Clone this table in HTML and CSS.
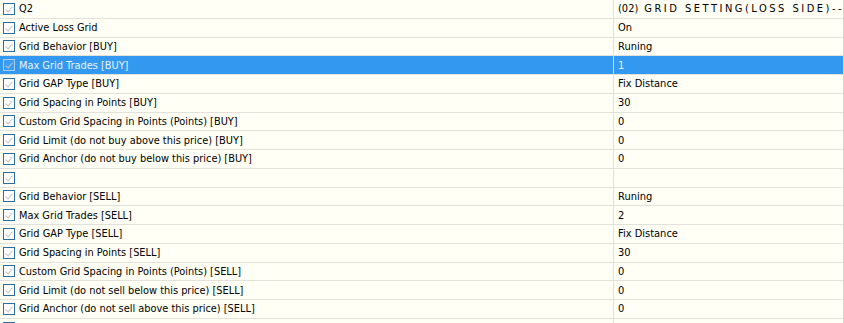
FILE: index.html
```html
<!DOCTYPE html>
<html>
<head>
<meta charset="utf-8">
<link rel="stylesheet" href="styles.css">
</head>
<body>
<div class="grid">
  <div class="row"><div class="name"><span class="cb"></span>Q2</div><div class="val"><span>(02)</span><span class="hdr">GRID SETTING(LOSS SIDE)--</span></div></div>
  <div class="row"><div class="name"><span class="cb"></span>Active Loss Grid</div><div class="val">On</div></div>
  <div class="row"><div class="name"><span class="cb"></span>Grid Behavior [BUY]</div><div class="val">Runing</div></div>
  <div class="row sel"><div class="name"><span class="cb"></span>Max Grid Trades [BUY]</div><div class="val">1</div></div>
  <div class="row"><div class="name"><span class="cb"></span>Grid GAP Type [BUY]</div><div class="val">Fix Distance</div></div>
  <div class="row"><div class="name"><span class="cb"></span>Grid Spacing in Points [BUY]</div><div class="val">30</div></div>
  <div class="row"><div class="name"><span class="cb"></span>Custom Grid Spacing in Points (Points) [BUY]</div><div class="val">0</div></div>
  <div class="row"><div class="name"><span class="cb"></span>Grid Limit (do not buy above this price) [BUY]</div><div class="val">0</div></div>
  <div class="row"><div class="name"><span class="cb"></span>Grid Anchor (do not buy below this price) [BUY]</div><div class="val">0</div></div>
  <div class="row"><div class="name"><span class="cb"></span></div><div class="val"></div></div>
  <div class="row"><div class="name"><span class="cb"></span>Grid Behavior [SELL]</div><div class="val">Runing</div></div>
  <div class="row"><div class="name"><span class="cb"></span>Max Grid Trades [SELL]</div><div class="val">2</div></div>
  <div class="row"><div class="name"><span class="cb"></span>Grid GAP Type [SELL]</div><div class="val">Fix Distance</div></div>
  <div class="row"><div class="name"><span class="cb"></span>Grid Spacing in Points [SELL]</div><div class="val">30</div></div>
  <div class="row"><div class="name"><span class="cb"></span>Custom Grid Spacing in Points (Points) [SELL]</div><div class="val">0</div></div>
  <div class="row"><div class="name"><span class="cb"></span>Grid Limit (do not sell below this price) [SELL]</div><div class="val">0</div></div>
  <div class="row"><div class="name"><span class="cb"></span>Grid Anchor (do not sell above this price) [SELL]</div><div class="val">0</div></div>
  <div class="row"><div class="name"><span class="cb"></span></div><div class="val"></div></div>
</div>
</body>
</html>
```
FILE: styles.css
```css
html, body {
  margin: 0;
  padding: 0;
  background: #fffff6;
  overflow: hidden;
}
.grid {
  width: 844px;
  box-sizing: border-box;
  border-right: 1px solid #d8d8d0;
  font-family: "DejaVu Sans Condensed", "DejaVu Sans", sans-serif;
  font-size: 11px;
  color: #000;
}
.row {
  display: grid;
  grid-template-columns: 613px 1fr;
  height: 18.75px;
  box-sizing: border-box;
  border-bottom: 1px solid #e2e2da;
}
.name, .val {
  display: flex;
  align-items: center;
  white-space: nowrap;
  overflow: hidden;
}
.name {
  padding-left: 3px;
  font-size: 10.9px;
}
.val {
  border-left: 1px solid #e2e2da;
  padding-left: 4px;
}
.hdr {
  margin-left: 6px;
  letter-spacing: 2.5px;
}
.cb {
  width: 10px;
  height: 10px;
  border: 1px solid #2b6ea5;
  background: #fff;
  margin-right: 4px;
  flex: none;
  position: relative;
}
.cb::after {
  content: "";
  position: absolute;
  left: 3px;
  top: 1px;
  width: 3px;
  height: 6px;
  border-right: 1px solid #c4c4c4;
  border-bottom: 1px solid #c4c4c4;
  transform: rotate(40deg);
}
.sel {
  background: #3398f0;
  color: #e8f4ff;
}
.sel .val {
  border-left-color: #c8e0f8;
}
.sel .cb {
  border-color: #a8d0f4;
  background: #3c9cf0;
}
```
